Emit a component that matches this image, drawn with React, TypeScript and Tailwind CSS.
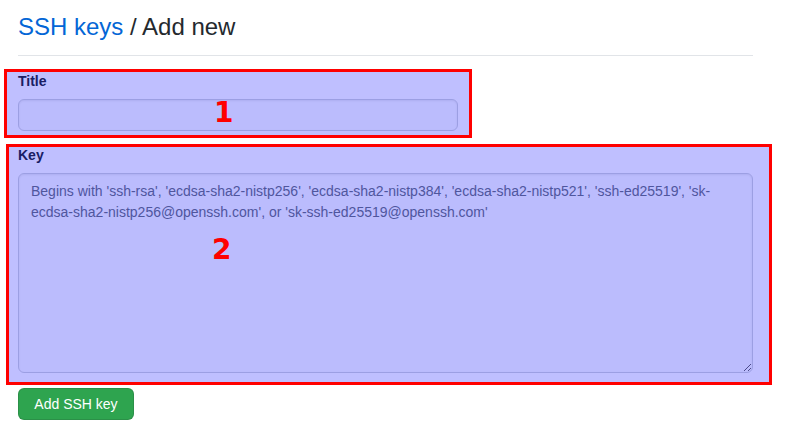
import React from 'react';

const App: React.FC = () => {
  return (
    <div className="relative min-h-[434px] w-[802px] bg-white px-[18px] font-['Liberation_Sans',Arial,sans-serif] text-[#24292e]">
      <div className="flex w-[735px] flex-col">
        {/* Subhead */}
        <div className="border-b border-[#e1e4e8] pt-[9px] pb-[10px]">
          <h1 className="text-[24px] font-normal leading-[36px]">
            <a href="#" className="text-[#0366d6]">SSH keys</a> / Add new
          </h1>
        </div>

        <form onSubmit={(e) => e.preventDefault()} className="mt-[15px] flex flex-col items-start">
          {/* Title */}
          <div className="flex flex-col gap-[7px]">
            <label className="text-[14px] font-bold leading-[21px]">Title</label>
            <input
              type="text"
              className="h-[32px] w-[440px] rounded-[6px] border border-[#d1d5da] bg-[#fafbfc] px-[12px] text-[14px] shadow-[inset_0_1px_2px_rgba(27,31,35,0.075)] outline-none"
            />
          </div>

          {/* Key */}
          <div className="mt-[14px] flex w-full flex-col gap-[7px]">
            <label className="text-[14px] font-bold leading-[21px]">Key</label>
            <textarea
              className="h-[200px] w-full rounded-[6px] border border-[#d1d5da] bg-[#fafbfc] px-[12px] pt-[7px] text-[14px] leading-[21px] shadow-[inset_0_1px_2px_rgba(27,31,35,0.075)] outline-none placeholder:text-[#6a737d]"
              placeholder="Begins with 'ssh-rsa', 'ecdsa-sha2-nistp256', 'ecdsa-sha2-nistp384', 'ecdsa-sha2-nistp521', 'ssh-ed25519', 'sk-ecdsa-sha2-nistp256@openssh.com', or 'sk-ssh-ed25519@openssh.com'"
            />
          </div>

          <button
            type="submit"
            className="mt-[15px] h-[32px] w-[116px] rounded-[6px] border border-[rgba(27,31,35,0.15)] bg-[#2ea44f] text-center text-[14px] leading-[20px] text-white"
          >
            Add SSH key
          </button>
        </form>
      </div>

      {/* Annotation overlays */}
      <div className="pointer-events-none absolute left-[4px] top-[69px] h-[69px] w-[468px] border-[3px] border-[#ff0000] bg-[rgba(0,0,255,0.25)]">
        <span className="absolute left-[207px] top-[27px] font-['DejaVu_Sans',sans-serif] text-[28px] font-bold leading-[28px] text-[#ff0000]">1</span>
      </div>
      <div className="pointer-events-none absolute left-[6px] top-[144px] h-[241px] w-[766px] border-[3px] border-[#ff0000] bg-[rgba(0,0,255,0.25)]">
        <span className="absolute left-[203px] top-[89px] font-['DejaVu_Sans',sans-serif] text-[28px] font-bold leading-[28px] text-[#ff0000]">2</span>
      </div>
    </div>
  );
};

export default App;
